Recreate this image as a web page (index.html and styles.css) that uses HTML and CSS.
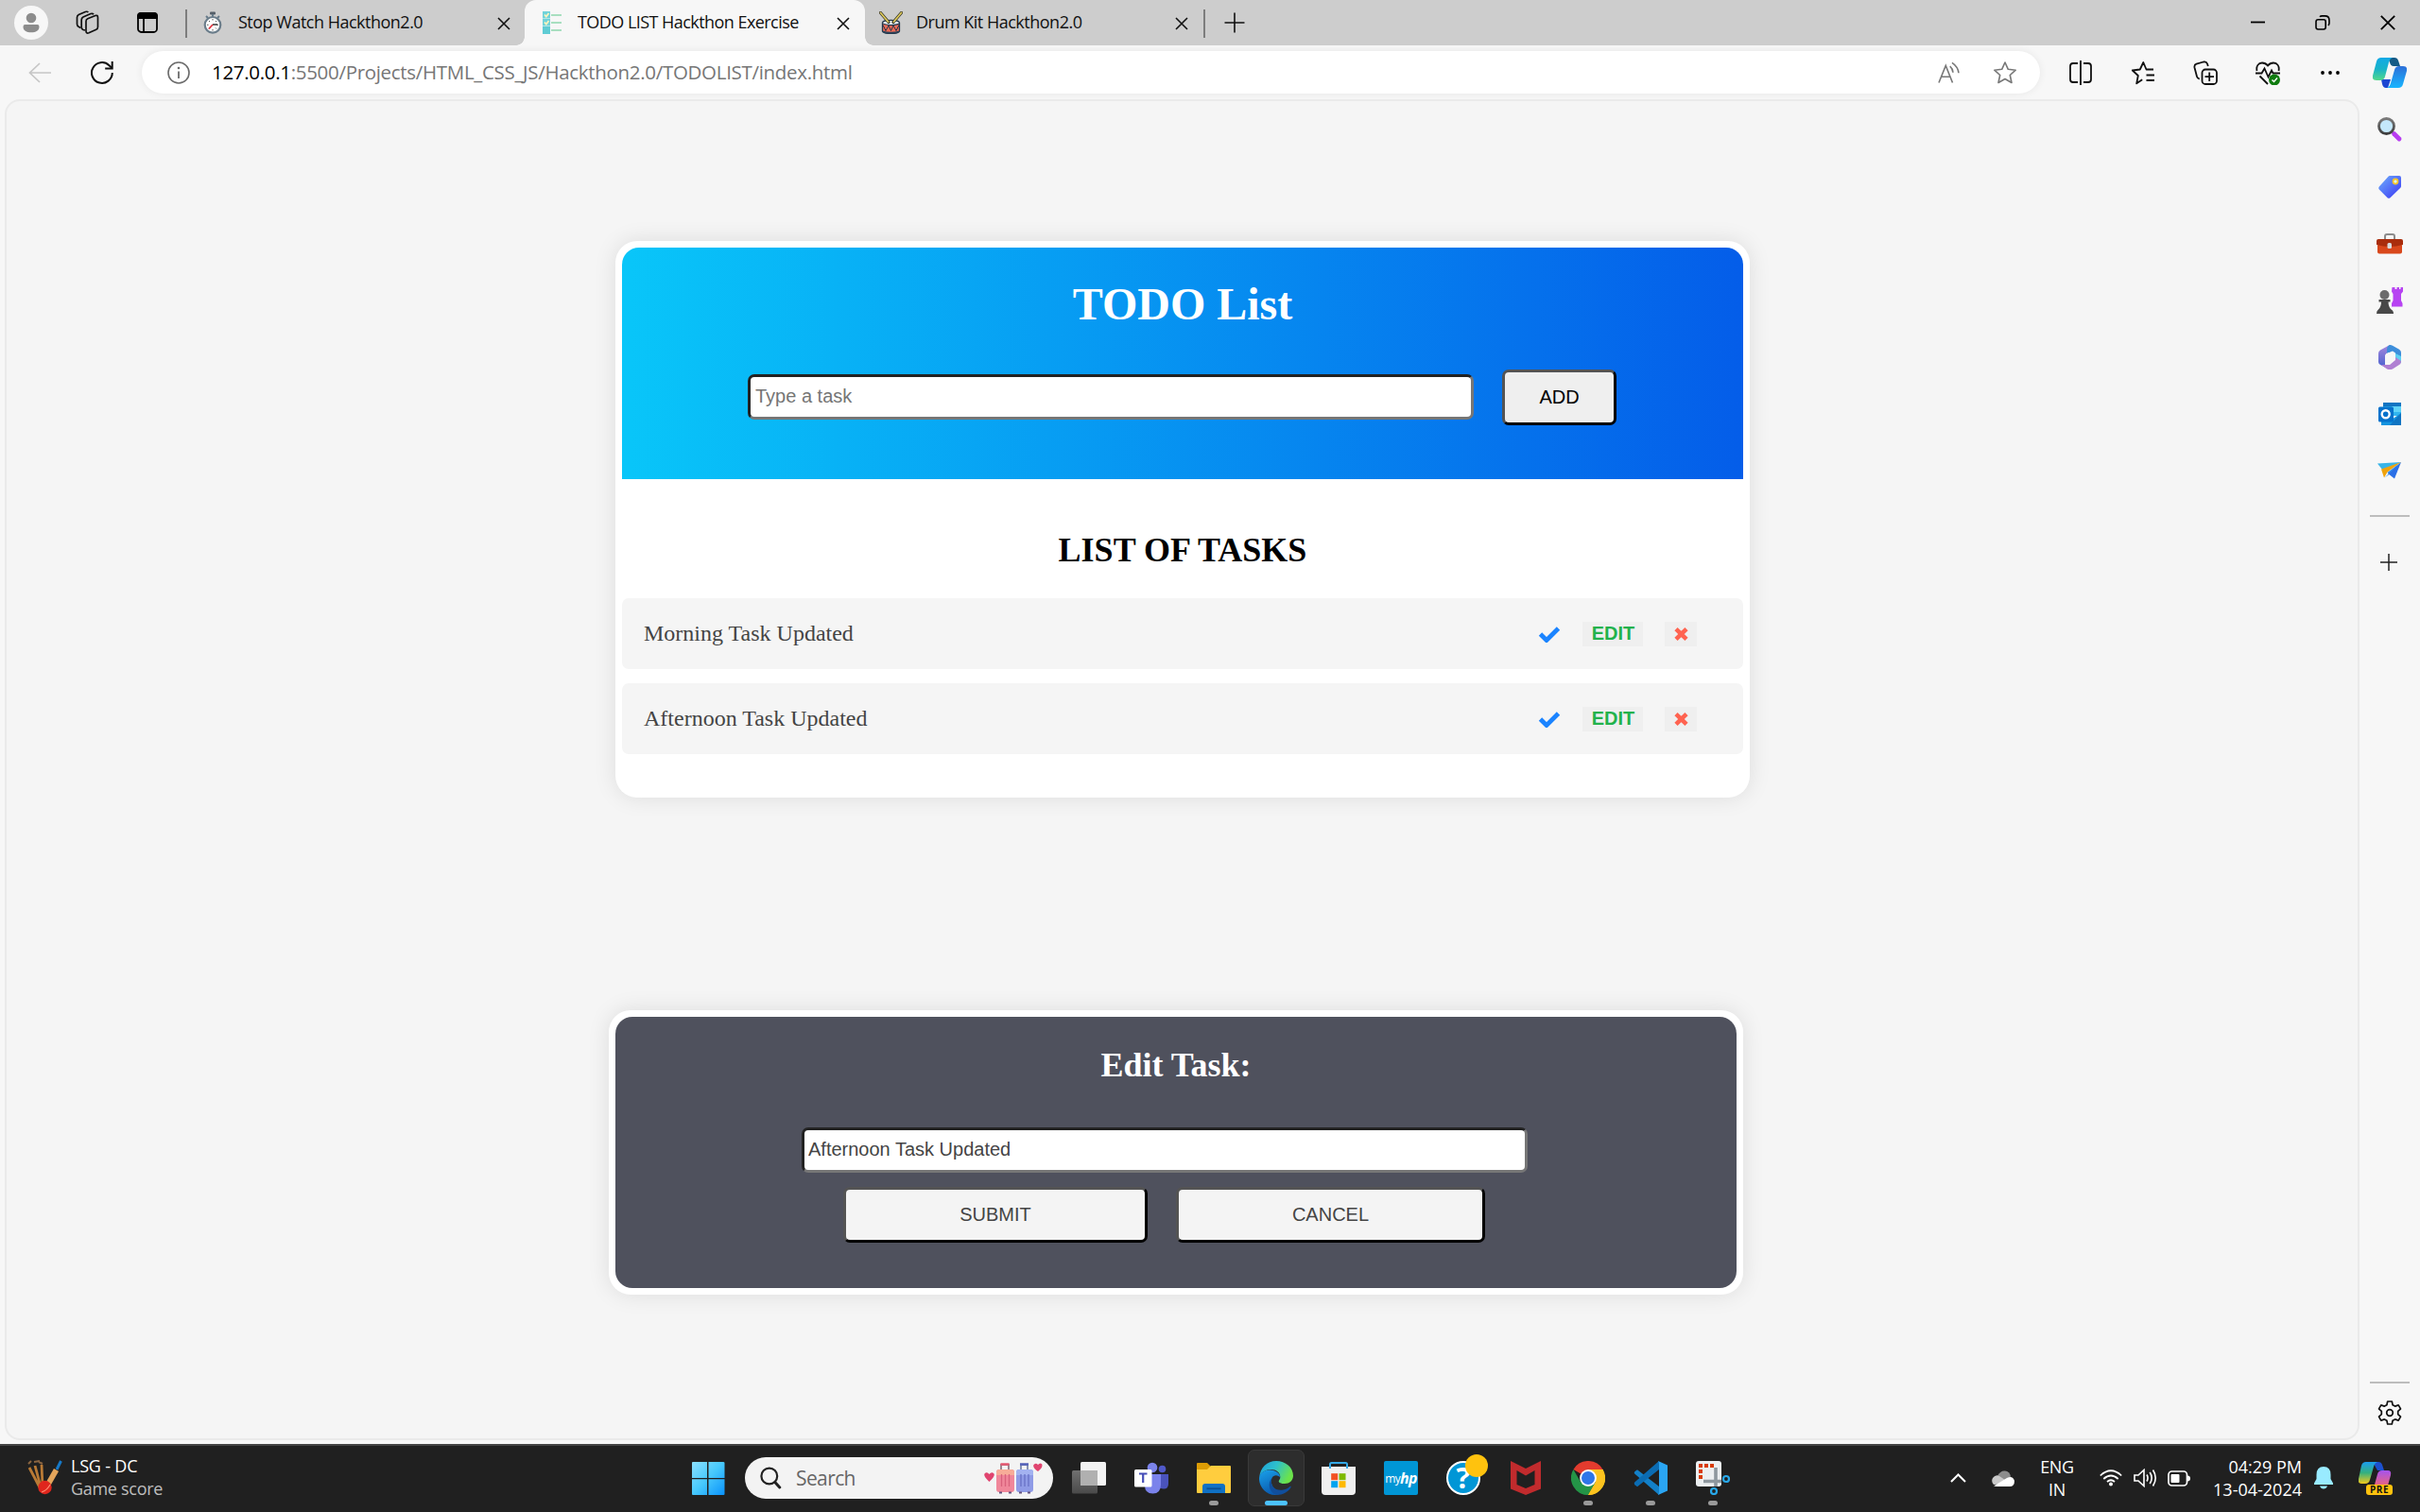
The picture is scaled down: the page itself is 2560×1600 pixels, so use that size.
FILE: index.html
```html
<!DOCTYPE html>
<html lang="en">
<head>
<meta charset="utf-8">
<title>TODO LIST Hackthon Exercise</title>
<link rel="stylesheet" href="styles.css">
</head>
<body>
<header class="tabstrip">
  <span class="profile"><svg width="18" height="28" viewBox="0 0 18 28" fill="#8c8c8c"><circle cx="9" cy="6" r="5.3"/><path d="M2.500 13h13q2 0 2 2.200c0 4-3.500 6-8.500 6s-8.500-2-8.500-6q0-2.200 2-2.200z"/></svg></span>
  <svg class="ic workspaces" width="26" height="26" viewBox="0 0 26 26" fill="none" stroke="#111" stroke-width="1.700"><path d="M11 11.500q0-2 1.800-2.700l8-3.300q2.700-.9 2.700 2v10q0 2-1.700 2.700l-7.800 3.600q-3 1-3-2z"/><path d="M10 21l-2-.5q-1.800-.8-1.800-2.700V10q0-2 1.800-3l8-3.500q2-.7 3 .8"/><path d="M5.500 18.500l-2-1Q1.500 16.500 1.500 14.500V7.500q0-2 1.800-3l7-3q2-.7 3 .6"/></svg>
  <svg class="ic tabact" width="22" height="22" viewBox="0 0 22 22"><rect x="1" y="1" width="20" height="20" rx="3.500" fill="none" stroke="#000" stroke-width="1.800"/><path d="M0 7V4q0-4 4-4h14q4 0 4 4v3z"/><path d="M7 7v14" stroke="#000" stroke-width="1.800"/></svg>
  <i class="vline"></i>
  <div class="tab tab-one">
    <svg width="20" height="24" viewBox="0 0 20 24"><rect x="7" y=".5" width="6" height="3" rx="1" fill="#555f69"/><path d="M10 3v3M3 5l2 2M17 5l-2 2" stroke="#667a8a" stroke-width="2"/><circle cx="10" cy="14.300" r="8.300" fill="#fff" stroke="#6b7d8b" stroke-width="2.200"/><path d="M10 8v1.500M10 19v1.500M4 14.300h1.500M14.500 14.300H16M6 10l1 1M14 10l-1 1M6 18.500l1-1M14 18.500l-1-1" stroke="#555"/><path d="M10 14l-4 4.500" stroke="#e2333f" stroke-width="1.800"/><path d="M10 14h5" stroke="#333" stroke-width="1.500"/></svg>
    <span class="tab-title t1">Stop Watch Hackthon2.0</span>
    <svg class="x" width="14" height="14" viewBox="0 0 14 14"><path d="M1 1l12 12M13 1L1 13" stroke="#111" stroke-width="1.600"/></svg>
  </div>
  <div class="tab tab-two active">
    <svg width="20" height="24" viewBox="0 0 20 24"><path d="M0 0h8v7.500H0zM0 8h8v7.500H0z" fill="#71d3da"/><path d="M0 16h8v8H0z" fill="#5fccd4"/><path d="M2 3.500l1.800 2L6.500 2M2 11.500l1.800 2L6.500 10" fill="none" stroke="#fff4bc" stroke-width="1.800"/><path d="M9 4h11M9 12h11M9 20h11" stroke="#a8dfc0" stroke-width="1.800"/></svg>
    <span class="tab-title t2">TODO LIST Hackthon Exercise</span>
    <svg class="x" width="14" height="14" viewBox="0 0 14 14"><path d="M1 1l12 12M13 1L1 13" stroke="#111" stroke-width="1.600"/></svg>
  </div>
  <div class="tab tab-three">
    <svg width="25" height="24" viewBox="0 0 25 24"><path d="M3.500 12.500h18V21q-1 2.500-9 2.500T3.500 21z" fill="#ee6a55" stroke="#22364a" stroke-width="1.300"/><path d="M4 14.500l3 6 3-5.500 2.500 5.500 2.500-5.500 3 5.500 3-6" fill="none" stroke="#22364a" stroke-width="1"/><path d="M3.500 20.500q9 2.500 18 0V22q-9 3-18 0z" fill="#2b4258"/><ellipse cx="12.500" cy="12" rx="9" ry="2.600" fill="#e8f1f7" stroke="#22364a" stroke-width="1.100"/><path d="M1.500 1.500l8.500 10M23.500 1.500L15 11.500" stroke="#3c3a2a" stroke-width="3.200" stroke-linecap="round"/><path d="M1.500 1.500l8 9.500M23.500 1.500l-8 9.500" stroke="#e0cc5c" stroke-width="1.700" stroke-linecap="round"/></svg>
    <span class="tab-title t3">Drum Kit Hackthon2.0</span>
    <svg class="x" width="14" height="14" viewBox="0 0 14 14"><path d="M1 1l12 12M13 1L1 13" stroke="#111" stroke-width="1.600"/></svg>
  </div>
  <i class="vline v2"></i>
  <svg class="newtab" width="22" height="22" viewBox="0 0 22 22"><path d="M11 .5v21M.5 11h21" stroke="#111" stroke-width="1.600"/></svg>
  <div class="wincontrols">
    <svg width="15" height="16" viewBox="0 0 15 16"><path d="M0 7.500h15" stroke="#000" stroke-width="1.800"/></svg>
    <svg width="16" height="16" viewBox="0 0 16 16" fill="none" stroke="#000" stroke-width="1.600"><rect x="1" y="4.800" width="10.200" height="10.200" rx="2.200"/><path d="M5 1.800q.8-.9 2.300-.9h3.200q4.500 0 4.500 4.500v3q0 1.700-1.200 2.500"/></svg>
    <svg width="16" height="16" viewBox="0 0 16 16"><path d="M.8.8l14.400 14.400M15.200.8L.8 15.200" stroke="#000" stroke-width="1.800"/></svg>
  </div>
</header>

<nav class="toolbar">
  <svg class="back" width="24" height="22" viewBox="0 0 24 22" fill="none" stroke="#c6c6c6" stroke-width="1.700"><path d="M12 1L1.500 11 12 21M1.500 11H24"/></svg>
  <svg class="reload" width="24" height="26" viewBox="0 0 24 26" fill="none" stroke="#111" stroke-width="2"><path d="M22.800 13A10.900 10.900 0 1 1 19.500 5.200L22.500 8"/><path d="M22.700 1v7.500h-7.500"/></svg>
  <div class="address">
    <svg width="24" height="24" viewBox="0 0 24 24"><circle cx="12" cy="12" r="11" fill="none" stroke="#6b6b6b" stroke-width="1.600"/><path d="M12 10.500V18" stroke="#6b6b6b" stroke-width="1.800"/><circle cx="12" cy="7" r="1.300" fill="#6b6b6b"/></svg>
    <span class="url"><b>127.0.0.1</b>:5500/Projects/HTML_CSS_JS/Hackthon2.0/TODOLIST/index.html</span>
    <svg class="read" width="24" height="24" viewBox="0 0 24 24" fill="none" stroke="#777" stroke-width="1.600"><path d="M1 22.500L8.300 4.500l7.200 18M3.600 16.300h9.400M12.800 5.200q3 2.700 3.200 6.500M15 1.300q6.500 4.500 7 11"/></svg>
    <svg class="star" width="26" height="26" viewBox="0 0 26 26" fill="none" stroke="#777" stroke-width="1.600" stroke-linejoin="round"><path d="M13 2l3.300 7.300 7.900.9-5.900 5.300 1.700 8L13 19.500l-7 4 1.700-8L1.800 10.200l7.900-.9z"/></svg>
  </div>
  <div class="tools">
    <svg width="26" height="26" viewBox="0 0 26 26" fill="none" stroke="#111" stroke-width="1.800"><path d="M10 3H5Q2 3 2 6v14q0 3 3 3h5M16 3h5q3 0 3 3v14q0 3-3 3h-5M13 0v26"/></svg>
    <svg width="26" height="26" viewBox="0 0 26 26" fill="none" stroke="#111" stroke-width="1.800" stroke-linejoin="round"><path d="M24 9.500h-7.500L13.300 2l-3.500 7.500-8 1 6 5.500-1.600 8.300 6-4M16.500 15.500H25M16.500 21H25"/></svg>
    <svg width="26" height="26" viewBox="0 0 26 26" fill="none" stroke="#111" stroke-width="1.800"><rect x="9.500" y="9.500" width="15.500" height="15.500" rx="3.500"/><path d="M17.200 12.500v9.500M12.500 17.200H22M6.800 19.500q-2.200-.3-2.800-2.500L1.500 7.500q-.6-3 2-3.800L11 1.500q3-.7 4 2l.8 2.500"/></svg>
    <svg width="26" height="26" viewBox="0 0 26 26" fill="none" stroke="#111" stroke-width="1.800"><path d="M1.500 11C.5 6 3 2.500 7 2.500q3.500 0 6 3 2.500-3 6-3c4 0 6.500 3.500 5.500 8.500"/><path d="M0 13.500h6.500l3-5 4 9 3.500-7 1.500 3H26M4.500 16.500L13 25"/><circle cx="20" cy="20.500" r="6" fill="#107c10" stroke="none"/><path d="M17.500 20.500l2 2 3.500-4" stroke="#fff" stroke-width="1.500"/></svg>
    <svg width="26" height="26" viewBox="0 0 26 26"><circle cx="5" cy="13" r="1.900"/><circle cx="13" cy="13" r="1.900"/><circle cx="21" cy="13" r="1.900"/></svg>
    <svg class="copilot" width="36" height="34" viewBox="0 0 36 34"><defs><linearGradient id="ca" x1="0" y1="0" x2="0" y2="1"><stop offset="0" stop-color="#12a9e6"/><stop offset=".5" stop-color="#18b3c9"/><stop offset="1" stop-color="#54d88a"/></linearGradient><linearGradient id="cb" x1="0" y1="0" x2="0" y2="1"><stop offset="0" stop-color="#2d6fd8"/><stop offset="1" stop-color="#18b6ff"/></linearGradient></defs><path d="M16 1h7q3 0 4 3l2 6h-7q-3 0-4-4z" fill="#145a86"/><path d="M9 24h10l-3 9h-2q-3 0-4-4z" fill="#1c46d2"/><path d="M9 1h12q-3 1-4 5l-4 15q-1 4-5 4H4q-5 0-4-5L4 5q1-4 5-4z" fill="url(#ca)"/><path d="M27 33H15q3-1 4-5l4-14q1-4 5-4h4q5 0 4 5l-4 14q-1 4-5 4z" fill="url(#cb)"/></svg>
  </div>
</nav>

<div class="middle">
  <main class="viewport">
    <section class="card">
      <div class="card-head">
        <h1>TODO List</h1>
        <form class="add-form"><input class="field" type="text" placeholder="Type a task"><button class="btn add" type="button">ADD</button></form>
      </div>
      <h2>LIST OF TASKS</h2>
      <ul class="tasks">
        <li class="task"><span class="name">Morning Task Updated</span>
          <svg class="check" width="24" height="18" viewBox="0 0 24 18"><path d="M2.500 9l6.500 6.500L21.500 3" fill="none" stroke="#1b84ff" stroke-width="4.800"/></svg>
          <button class="mini edit" type="button">EDIT</button>
          <button class="mini del" type="button" aria-label="Delete"><svg width="15" height="14" viewBox="0 0 15 14"><path d="M2 1.700l11 10.600M13 1.700L2 12.300" stroke="#ff6350" stroke-width="4.600"/></svg></button></li>
        <li class="task"><span class="name">Afternoon Task Updated</span>
          <svg class="check" width="24" height="18" viewBox="0 0 24 18"><path d="M2.500 9l6.500 6.500L21.500 3" fill="none" stroke="#1b84ff" stroke-width="4.800"/></svg>
          <button class="mini edit" type="button">EDIT</button>
          <button class="mini del" type="button" aria-label="Delete"><svg width="15" height="14" viewBox="0 0 15 14"><path d="M2 1.700l11 10.600M13 1.700L2 12.300" stroke="#ff6350" stroke-width="4.600"/></svg></button></li>
      </ul>
    </section>
    <section class="edit-card">
      <div class="edit-inner">
        <h2>Edit Task:</h2>
        <input class="field" type="text" value="Afternoon Task Updated">
        <div class="edit-actions"><button class="btn submit" type="button">SUBMIT</button><button class="btn cancel" type="button">CANCEL</button></div>
      </div>
    </section>
  </main>
  <aside class="sidebar">
    <svg width="28" height="28" viewBox="0 0 28 28"><defs><linearGradient id="sg" x1="0" y1="0" x2="0" y2="1"><stop offset="0" stop-color="#7a7a7a"/><stop offset="1" stop-color="#3e3e3e"/></linearGradient></defs><path d="M18.500 18.500l5.500 5.500" stroke="#b83df0" stroke-width="4.800" stroke-linecap="round"/><circle cx="10.500" cy="10.500" r="8" fill="#c4e8fb" stroke="url(#sg)" stroke-width="2.800"/></svg>
    <svg width="28" height="28" viewBox="0 0 28 28"><defs><linearGradient id="tg" x1="0" y1="0" x2="1" y2="1"><stop offset="0" stop-color="#6fb0fb"/><stop offset="1" stop-color="#3a35f5"/></linearGradient></defs><path d="M14 2h10q2 0 2 2v9q0 1-.7 1.700L14.500 25.200q-1.500 1.300-3 0l-8.700-8.700q-1.300-1.500 0-3L12.500 2.700Q13 2 14 2z" fill="url(#tg)"/><circle cx="20" cy="8" r="2.500" fill="#dff" stroke="#f6c52c" stroke-width="1.800"/></svg>
    <svg width="28" height="28" viewBox="0 0 28 28"><path d="M9 9V6q0-2 2-2h6q2 0 2 2v3" fill="none" stroke="#8c8c8c" stroke-width="2"/><rect x="1" y="14" width="26" height="10.500" rx="2" fill="#d9481c"/><path d="M2 9h24q2 0 2 2v4q-14 4-28 0v-4q0-2 2-2z" fill="#a92d0c"/><rect x="11.500" y="13" width="4.500" height="6" rx="1.500" fill="#d8dde0"/></svg>
    <svg width="28" height="28" viewBox="0 0 28 28"><path d="M16.500 0h3v2h2V0h2.500v2h1.500V0h2.500v4.500L26 7v7l1.500 3v3.500H16V17l1.500-3V7l-1.500-2.500z" fill="#b743f2"/><circle cx="8.500" cy="8" r="5" fill="#6b6b6b"/><path d="M2.500 13h12v2.500h-2q0 5 3 8 2.500 1 2.500 4.500H0q0-3.500 2-4.500 3-3 3-8H2.500z" fill="#484848"/></svg>
    <svg width="28" height="28" viewBox="0 0 28 28"><defs><linearGradient id="ma" x1="0" y1="0" x2="0" y2="1"><stop offset="0" stop-color="#a687dc"/><stop offset="1" stop-color="#4a62cf"/></linearGradient></defs><path d="M14 1L4 6.500q-2 1.200-2 3.500v9q0 2 2 3l5 2.500V13q0-3 5-5z" fill="url(#ma)"/><path d="M14 1q-3 1-3 5v4l6-2.500 3 2V17l6 3V9q0-2-2-3.200L17 1.700Q15.500.8 14 1z" fill="#3d8edb"/><path d="M20 10l6 3v7l-6-4z" fill="#5ed0f2"/><path d="M26 18q0 3-2 4l-7 4.500q-3 1.200-6 0L5 22l9 0 6-5v-3z" fill="#b07fd2"/><circle cx="14" cy="14" r="5" fill="#f7f7f7"/></svg>
    <svg width="28" height="28" viewBox="0 0 28 28"><rect x="7" y="2" width="19" height="14" fill="#31b5ef"/><path d="M7 2h19v4H7z" fill="#1175c3"/><path d="M16 6h10v6H16z" fill="#5fd3f7"/><path d="M5 14l11 6 10-7v13H5z" fill="#1494df"/><path d="M26 13L14 26h12z" fill="#0f74c2"/><rect x="2" y="6.500" width="16" height="16" rx="1.500" fill="#0572cc"/><circle cx="9.700" cy="14.300" r="4" fill="none" stroke="#fff" stroke-width="2.400"/></svg>
    <svg width="28" height="28" viewBox="0 0 28 28"><path d="M1 6.500L26 5 7 14z" fill="#38b4e8"/><path d="M26 5L19 22.500 12 17z" fill="#2b6fe6"/><path d="M26 5L5 12.500l3 9 3.500-6z" fill="#f0a30c"/><path d="M26 5L11.500 16l2 2-5 3.500z" fill="#2e8bee"/></svg>
    <i class="hline"></i>
    <svg class="plus" width="28" height="28" viewBox="0 0 28 28"><path d="M13 5v18M4 14h18" stroke="#222" stroke-width="1.500"/></svg>
    <i class="hline bottom"></i>
    <svg class="gear" width="26" height="26" viewBox="0 0 26 26" fill="none" stroke="#111" stroke-width="1.700" stroke-linejoin="round"><path d="M10.700 1h4.600l.8 3.700 2.500 1.400 3.600-1.200 2.300 4-2.800 2.500v3.200l2.800 2.500-2.300 4-3.600-1.200-2.500 1.400-.8 3.700h-4.600l-.8-3.700-2.500-1.400-3.600 1.200-2.300-4 2.800-2.500v-3.200L1.500 8.900l2.300-4 3.600 1.200 2.500-1.400z"/><circle cx="13" cy="13" r="3.300"/></svg>
  </aside>
</div>

<footer class="taskbar">
  <div class="widget">
    <svg width="37" height="37" viewBox="0 0 37 37"><path d="M2 8l11 21M8 6l6 22M15 5l1 22" stroke="#b97a35" stroke-width="2.800"/><path d="M1 4l3-3M7 2l6-1M12 2l4 2" stroke="#8b6541" stroke-width="2"/><path d="M28 9l5 3-12 21-5-3z" fill="#e4a55b"/><path d="M31 10l4.500-9" stroke="#1679c8" stroke-width="3"/><circle cx="18.500" cy="29" r="7.200" fill="#e0261d"/><path d="M15 34q6-2 9-8" stroke="#ff8a70" stroke-width="1.200" fill="none"/></svg>
    <div class="score"><span class="s1">LSG - DC</span><span class="s2">Game score</span></div>
  </div>
  <div class="apps">
    <span class="app start"><svg width="36" height="36" viewBox="0 0 36 36"><defs><linearGradient id="wg" x1="0" y1="0" x2="1" y2="1"><stop offset="0" stop-color="#8be1ff"/><stop offset=".5" stop-color="#46c8fc"/><stop offset="1" stop-color="#0a92fb"/></linearGradient></defs><path d="M2 1h15v17H1V2q0-1 1-1zM18.500 1H34q1.500 0 1.500 1v16h-17zM1 19.300h16V36H2q-1 0-1-1zM18.500 19.300h17V35q0 1-1 1h-16z" fill="url(#wg)"/></svg></span>
    <div class="search">
      <svg width="23" height="24" viewBox="0 0 23 24" fill="none" stroke="#222" stroke-linecap="round"><circle cx="9.800" cy="10" r="8.400" stroke-width="2.200"/><path d="M15.800 16.500l5 5.500" stroke-width="3"/></svg>
      <span class="st">Search</span>
      <svg class="bags" width="62" height="34" viewBox="0 0 62 34"><path d="M5.500 21Q-1 15 .5 12.500 3 10 5.500 13 8 10 10.500 12.500 12 15 5.500 21zM57 10q-6-4-4.500-7Q55 .5 57 3q2-2.500 4-1 2 3-4 8z" fill="#e0446f"/><path d="M18 9V3h8v6" fill="none" stroke="#9b8791" stroke-width="2"/><path d="M17.500 2.500h9" stroke="#e65770" stroke-width="2.500"/><path d="M39 9V3h7v6" fill="none" stroke="#8793b4" stroke-width="2"/><path d="M38 2.500h9" stroke="#5361b9" stroke-width="2.500"/><rect x="13" y="8" width="19" height="24" rx="3" fill="#f0879a"/><path d="M13 14v-3q0-3 3-3h13q3 0 3 3v3z" fill="#f7ac98"/><rect x="34" y="8" width="18" height="24" rx="3" fill="#8f9be6"/><path d="M34 14v-3q0-3 3-3h12q3 0 3 3v3z" fill="#a3b2f0"/><path d="M18.500 13v13M22.500 13v13M26.500 13v13" stroke="#d8627c" stroke-width="1.300"/><path d="M39 13v13M43 13v13M47 13v13" stroke="#6872c6" stroke-width="1.300"/><path d="M16 32.500h3M26 32.500h3M37 32.500h3M46 32.500h3" stroke="#66547f" stroke-width="2"/></svg>
    </div>
    <span class="app"><svg width="36" height="36" viewBox="0 0 36 36"><defs><linearGradient id="tv" x1="0" y1="0" x2="0" y2="1"><stop offset="0" stop-color="#707070"/><stop offset="1" stop-color="#4a4a4a"/></linearGradient></defs><rect x="9" y="1" width="27" height="25" rx="1.500" fill="#f3f3f3"/><rect x="0" y="10" width="27" height="24.500" rx="1.500" fill="url(#tv)"/><path d="M9 10h18v16H9z" fill="#b0b0b0"/></svg></span>
    <span class="app"><svg width="36" height="36" viewBox="0 0 36 36"><circle cx="29.500" cy="8.500" r="3.800" fill="#5059c9"/><path d="M25 14h11v10q0 5.500-5 5.500-4 0-6-3z" fill="#4a53bc"/><circle cx="19" cy="7" r="5.300" fill="#7b83eb"/><path d="M11 14h17v11q0 9.500-8.500 9.500T11 26z" fill="#7b83eb"/><rect y="9" width="18.500" height="18.500" rx="1.500" fill="#fff"/><path d="M5 13.500h8.500M9.200 13.500V23" stroke="#464eb8" stroke-width="2.200"/></svg></span>
    <span class="app"><svg width="36" height="36" viewBox="0 0 36 36"><path d="M0 3q0-1 1-1h10l4 4-3 5H0z" fill="#dc9c05"/><path d="M0 9h11l4-4h20q1 0 1 1v27q0 1-1 1H1q-1 0-1-1z" fill="#ffcd3e"/><path d="M6 34V27q0-3 3-3h18q3 0 3 3v7z" fill="#0f71c5"/><path d="M10.500 29.300h15" stroke="#0a4f92" stroke-width="1.800"/></svg><i class="dot"></i></span>
    <span class="app current"><svg width="36" height="36" viewBox="0 0 36 36"><defs><linearGradient id="ea" x1="0" y1="0" x2="1" y2=".4"><stop offset="0" stop-color="#1c9fdd"/><stop offset=".5" stop-color="#2ec0cb"/><stop offset="1" stop-color="#6be34b"/></linearGradient><linearGradient id="eb" x1="0" y1="0" x2=".4" y2="1"><stop offset="0" stop-color="#1aa2ea"/><stop offset="1" stop-color="#0a5bb0"/></linearGradient></defs><path d="M.3 17C1 7 8.500 0 18 0c10 0 18 7 18 15.500 0 5-4 8.500-9 8.500-4 0-6.300-1.300-6.300-2.600 0-1 1.600-1.800 1.600-4.400C22.300 12 18 9 13 9 7 9 1.500 12 .3 17z" fill="url(#ea)"/><path d="M0 18C.5 12.500 6 9.500 11.500 9.500c6 0 10.800 3.700 10.800 8-2-3-7-3.500-8.800.5-3 6.500 3 14.500 11 14.500C22 35 20 36 17 36 7 36-.5 27 0 18z" fill="url(#eb)"/><path d="M13.500 18c-3 9 4 14 12 12.500 3-.5 5-1.800 7-3.500 1-.6 1.500 0 1 1C31 32.500 25 36 18.500 36 11 34 8 24 13.500 18z" fill="#104e9c"/></svg><i class="dot long"></i></span>
    <span class="app"><svg width="36" height="36" viewBox="0 0 36 36"><path d="M9 8V3.500Q9 2 10.500 2h15Q27 2 27 3.500V8" fill="none" stroke="#35a9e6" stroke-width="2"/><path d="M0 6h36v26q0 4-4 4H4q-4 0-4-4z" fill="#f0f0f0"/><path d="M9 4v4M27 4v4" stroke="#35a9e6" stroke-width="2"/><path d="M10.200 13.200h7v7h-7z" fill="#f25022"/><path d="M18.500 13.200h7v7h-7z" fill="#7fba00"/><path d="M10.200 21.200h7v7h-7z" fill="#00a4ef"/><path d="M18.500 21.200h7v7h-7z" fill="#ffb900"/></svg></span>
    <span class="app"><span class="myhp">my<b>hp</b></span></span>
    <span class="app"><span class="help">?</span><i class="badge"></i></span>
    <span class="app"><svg width="36" height="36" viewBox="0 0 36 36"><path d="M2 0l16 8L34 0v29.500L18 36 2 29.500zM8.500 10v15L18 29l9.500-4V10L18 15.500z" fill="#c12b2d"/></svg></span>
    <span class="app"><svg width="36" height="36" viewBox="0 0 36 36"><path d="M18 18L2.400 9A18 18 0 0 1 33.600 9z" fill="#e23b2e"/><path d="M18 9h15.600A18 18 0 0 1 18 36l7.800-13.500z" fill="#fcc31e"/><path d="M2.400 9l7.800 13.500L18 27v9A18 18 0 0 1 2.400 9z" fill="#249447"/><path d="M10.200 22.500l7.800 4.500 7.800-4.500L18 36 A18 18 0 0 1 9 33.600z" fill="#249447"/><path d="M25.800 22.500L18 36A18 18 0 0 0 36 18l-2.400-9H18z" fill="#fcc31e"/><circle cx="18" cy="18" r="8.900" fill="#fff"/><circle cx="18" cy="18" r="7" fill="#2f76e8"/></svg><i class="dot"></i></span>
    <span class="app"><svg width="36" height="36" viewBox="0 0 36 36"><path d="M1 11.500l3-2.200L27 27v9L1.200 13.500q-1-1 0-2z" fill="#1380c8"/><path d="M1 25l3 2.200L27 9V0L1.200 22.500q-1 1 0 2.500z" fill="#0b6cb3"/><path d="M26 0l10 4.500v27L26 36q1-1 1-3V3q0-2-1-3z" fill="#2aa5f3"/></svg><i class="dot"></i></span>
    <span class="app"><svg width="36" height="36" viewBox="0 0 36 36"><rect width="27" height="27" rx="3" fill="#eceff1"/><path d="M3 5h4M9 5h4M15 5h4" stroke="#d83b01" stroke-width="4"/><path d="M5 9v4M5 15v4" stroke="#d83b01" stroke-width="4"/><path d="M21 7v20M8 21.500h19" stroke="#8e979e" stroke-width="3.600"/><circle cx="19" cy="32" r="3" fill="none" stroke="#28a8ea" stroke-width="2.200"/><circle cx="32" cy="19" r="3" fill="none" stroke="#28a8ea" stroke-width="2.200"/></svg><i class="dot"></i></span>
  </div>
  <div class="tray">
    <svg class="chev" width="17" height="10" viewBox="0 0 17 10"><path d="M1 9l7.500-7.500L16 9" fill="none" stroke="#fff" stroke-width="2"/></svg>
    <svg class="cloud" width="24" height="17" viewBox="0 0 24 17"><path d="M6 6Q9 0 14 .5q5 .5 6 6l-8 5z" fill="#8c8c8c"/><path d="M2 15q-3-3-1-7 3-4 7-2l12 8z" fill="#c9c9c9"/><path d="M3 16l13-8q6-3 8 3 0 6-5 6H5q-2 0-3-1z" fill="#fff"/></svg>
    <div class="lang"><span>ENG</span><span>IN</span></div>
    <svg class="wifi" width="24" height="18" viewBox="0 0 24 18" fill="none" stroke="#fff" stroke-width="1.700"><path d="M.8 6.500q11.200-10.500 22.400 0M4.300 10q7.700-7 15.400 0M8 13q4-3.500 8 0"/><circle cx="12" cy="15.500" r="2" fill="#fff" stroke="none"/></svg>
    <svg class="snd" width="25" height="20" viewBox="0 0 25 20" fill="none" stroke="#fff" stroke-width="1.600"><path d="M1 7h4l6-5.500v17L5 13H1zM14 6.500q2 3.500 0 7M17.200 4q4 6 0 12M20.500 1.500q5.500 8.500 0 17"/></svg>
    <svg class="bat" width="25" height="17" viewBox="0 0 25 17"><rect x="1" y="1" width="19.500" height="15" rx="3.500" fill="none" stroke="#fff" stroke-width="1.700"/><rect x="3.500" y="4" width="9" height="9" rx="1" fill="#fff"/><path d="M21 5.500q3 0 3 3t-3 3z" fill="#fff"/></svg>
    <div class="clock"><span class="c1">04:29 PM</span><span class="c2">13-04-2024</span></div>
    <svg class="bell" width="20" height="24" viewBox="0 0 20 24" fill="#99ebff"><path d="M10 0q7.500 0 7.500 8.500V13l2.500 4.500V19H0v-1.500L2.500 13V8.500Q2.500 0 10 0zM6 20.500h8q-1 3-4 3t-4-3z"/></svg>
    <span class="pre"><svg width="35" height="34" viewBox="0 0 35 34"><defs><linearGradient id="pa" x1="0" y1="0" x2="0" y2="1"><stop offset="0" stop-color="#1b9df0"/><stop offset=".5" stop-color="#35b07e"/><stop offset="1" stop-color="#f2c91c"/></linearGradient><linearGradient id="pb" x1="0" y1="0" x2="0" y2="1"><stop offset="0" stop-color="#a553ee"/><stop offset="1" stop-color="#fb6a62"/></linearGradient></defs><path d="M15 0h6q3 0 4 3l2 6h-7z" fill="#1c50cf"/><path d="M8 0h12q-3 1-4 5l-4 14q-1 4-5 4H3q-4 0-3-5L3 4q1-4 5-4z" fill="url(#pa)"/><path d="M22 29H12q4-2 5-5l3-11q1-4 5-4h6q4 0 3 5l-3 11q-1 4-5 4z" fill="url(#pb)"/></svg><b class="pretag">PRE</b></span>
  </div>
</footer>
</body>
</html>
```
FILE: styles.css
```css
* { box-sizing: border-box; }
body { margin: 0; width: 2560px; height: 1600px; overflow: hidden; display: flex; flex-direction: column; background: #f7f7f7; font-family: "Open Sans", "Noto Sans", sans-serif; }
svg { display: block; flex: none; }
h1, h2, ul { margin: 0; padding: 0; }

/* tab strip */
.tabstrip { height: 48px; background: #cdcdcd; display: flex; align-items: center; flex: none; }
.profile { width: 36px; height: 36px; margin-left: 15px; border-radius: 50%; background: #f7f7f7; display: flex; justify-content: center; padding-top: 7px; }
.workspaces { margin-left: 29px; }
.tabact { margin-left: 39px; }
.vline { width: 2px; height: 30px; background: #7d7d7d; margin: 2px 0 0 29px; }
.tab { height: 48px; display: flex; align-items: center; }
.tab-title { font-size: 18px; color: #111; white-space: nowrap; flex: 1; margin-left: 17px; letter-spacing: -0.500px; padding-bottom: 2px; }
.x { position: relative; top: 1px; }
.tab-one { width: 357px; padding: 0 15px 0 17px; }
.tab-two { width: 360px; padding: 0 16px 0 19px; background: #f7f7f7; border-radius: 12px 12px 0 0; position: relative; }
.t2 { letter-spacing: -0.550px; }
.tab-two::before, .tab-two::after { content: ""; position: absolute; bottom: 0; width: 9px; height: 9px; }
.tab-two::before { left: -9px; background: radial-gradient(circle at 0 0, transparent 8.5px, #f7f7f7 9px); }
.tab-two::after { right: -9px; background: radial-gradient(circle at 100% 0, transparent 8.5px, #f7f7f7 9px); }
.tab-three { width: 358px; padding: 0 16px 0 15px; }
.tab-three .tab-title { margin-left: 14px; }
.v2 { margin-left: 0; }
.newtab { margin-left: 20px; }
.wincontrols { margin-left: auto; margin-right: 26px; display: flex; gap: 53px; }

/* toolbar */
.toolbar { height: 57px; flex: none; display: flex; align-items: center; }
.back { margin-left: 30px; }
.reload { margin-left: 42px; }
.address { margin-left: 30px; width: 2008px; height: 45px; border-radius: 23px; background: #fff; box-shadow: 0 0 8px rgba(0,0,0,.07); display: flex; align-items: center; padding: 0 24px 0 27px; }
.url { flex: 1; margin-left: 23px; font-size: 20.500px; color: #767676; letter-spacing: -0.310px; white-space: nowrap; padding-bottom: 2px; }
.url b { font-weight: 400; color: #000; }
.star { margin-left: 34px; }
.tools { display: flex; align-items: center; gap: 40px; margin-left: 30px; }
.tools .copilot { margin-left: -8px; }

/* page area */
.middle { display: flex; height: 1423px; flex: none; }
.viewport { margin-left: 5px; width: 2491px; height: 1419px; background: #f5f5f5; border: 2px solid #eaeaea; border-radius: 16px; padding: 148px 0 0 644px; }
.card { width: 1200px; height: 589px; background: #fff; border-radius: 23px; padding: 7px; box-shadow: 0 0 23px rgba(0,0,0,.1); }
.card-head { height: 245px; padding-top: 32px; border-radius: 18px 18px 0 0; background: linear-gradient(90deg, #09c6f9, #045de9); }
h1, h2, .name { font-family: "Liberation Serif", serif; }
h1 { color: #fff; font-size: 48px; line-height: 56px; text-align: center; }
.add-form { display: flex; align-items: center; margin: 41px 0 0 133px; gap: 30px; }
.field { display: block; width: 768px; height: 48px; border: 3px solid; border-color: #222 #767676 #767676 #222; border-radius: 7px; padding: 0 5px 1px; background: #fff; font: 20px "Liberation Sans", sans-serif; color: #444; }
.add-form .field { margin-bottom: 2px; }
.field::placeholder { color: #757575; opacity: 1; }
.btn { height: 59px; border: 3px solid; border-color: #545454 #000 #000 #545454; border-radius: 7px; font: 20px "Liberation Sans", sans-serif; background: #f4f4f4; color: #444; padding: 0; }
.add { width: 121px; background: #efefef; color: #000; }
h2 { font-size: 36px; line-height: 42px; text-align: center; }
.card h2 { color: #000; margin: 54px 0 30px; }
.tasks { list-style: none; display: grid; gap: 15px; }
.task { height: 75px; background: #f5f5f5; border-radius: 7px; display: flex; align-items: center; padding: 0 49px 0 23px; }
.name { flex: 1; font-size: 24px; line-height: 28px; color: #444; padding-bottom: 2px; }
.check { margin: 1px 23px 0 0; }
.mini { height: 26px; border: 0; background: #efefef; padding: 0; display: grid; place-items: center; }
.edit { width: 64px; margin-right: 23px; color: #22b24c; font: bold 20px/22px "Liberation Sans", sans-serif; padding: 0 0 2px 1px; }
.del { width: 34px; }
.edit-card { margin: 225px 0 0 -7px; width: 1200px; height: 301px; background: #fff; border-radius: 23px; padding: 7px; box-shadow: 0 0 23px rgba(0,0,0,.1); }
.edit-inner { height: 287px; border-radius: 18px; background: #4f515d; padding-top: 30px; }
.edit-card h2 { color: #fff; }
.edit-card .field { margin: 45px 0 0 197px; width: 768px; padding: 0 4px 2px; }
.edit-actions { display: flex; gap: 30px; margin: 15px 0 0 241px; }
.submit { width: 322px; }
.cancel { width: 327px; }

/* sidebar */
.sidebar { width: 64px; display: flex; flex-direction: column; align-items: center; padding: 18px 1px 0 0; gap: 32px; }
.sidebar svg:nth-of-type(n+2):nth-of-type(-n+7) { position: relative; top: 1px; }
.hline { width: 42px; height: 2px; background: #bdbdbd; flex: none; margin-top: 2px; }
.plus { margin-top: 2px; }
.bottom { margin-top: auto; }
.gear { margin: -14px 0 20px; }

/* taskbar */
.taskbar { height: 72px; flex: none; background: #202020; border-top: 2px solid #444; padding-top: 4px; display: flex; }
.widget { width: 717px; height: 60px; display: flex; padding: 11px 0 0 29px; }
.score { margin: -6px 0 0 9px; display: flex; flex-direction: column; font-size: 18px; line-height: 24px; }
.s1 { color: #fff; letter-spacing: -.2px; }
.s2 { color: #bdbdbd; letter-spacing: -.3px; }
.apps { display: flex; height: 60px; align-items: center; }
.app { width: 66px; height: 60px; display: grid; place-items: center; position: relative; }
.start svg { margin-right: 2px; }
.search { width: 326px; height: 44px; margin: 0 5px; border-radius: 22px; background: #f3f3f3; display: flex; align-items: center; padding: 0 11px 0 16px; }
.st { flex: 1; margin-left: 15px; font-size: 21px; color: #666; letter-spacing: -.6px; }
.dot { position: absolute; bottom: 1px; left: 28px; width: 10px; height: 5px; border-radius: 3px; background: #9a9a9a; }
.long { width: 24px; left: 21px; background: #4cc2ff; }
.current::before { content: ""; position: absolute; inset: 0 3px; border-radius: 7px; background: #2d2d2d; border: 1px solid #3a3a3a; }
.current svg { position: relative; }
.myhp { width: 36px; height: 36px; border-radius: 2px; background: #0096d6; color: #fff; font-size: 12px; display: flex; align-items: center; justify-content: center; letter-spacing: -.7px; }
.myhp b { font-size: 16px; font-style: italic; }
.help { width: 36px; height: 36px; border-radius: 50%; border: 2.500px solid #fff; background: #0096d6; color: #fff; font-weight: 700; font-size: 31px; line-height: 31px; text-align: center; }
.badge { position: absolute; left: 35px; top: 5px; width: 24px; height: 24px; border-radius: 50%; background: #ffc20e; }
.tray { margin-left: auto; display: flex; align-items: center; height: 60px; color: #fff; font-size: 18px; line-height: 24px; }
.cloud { margin-left: 27px; }
.lang { display: flex; flex-direction: column; align-items: center; margin-left: 26px; width: 38px; letter-spacing: -.4px; }
.wifi { margin-left: 26px; }
.snd { margin-left: 12px; }
.bat { margin-left: 11px; }
.clock { display: flex; flex-direction: column; align-items: flex-end; width: 117px; letter-spacing: 0; margin-top: -1px; }
.bell { margin-left: 13px; }
.pre { position: relative; margin: 0 30px 0 27px; }
.pretag { position: absolute; left: 8px; top: 24px; width: 28px; height: 11px; border-radius: 3px; background: #ffc20e; color: #111; font-size: 10px; line-height: 11px; text-align: center; letter-spacing: .5px; }
```
